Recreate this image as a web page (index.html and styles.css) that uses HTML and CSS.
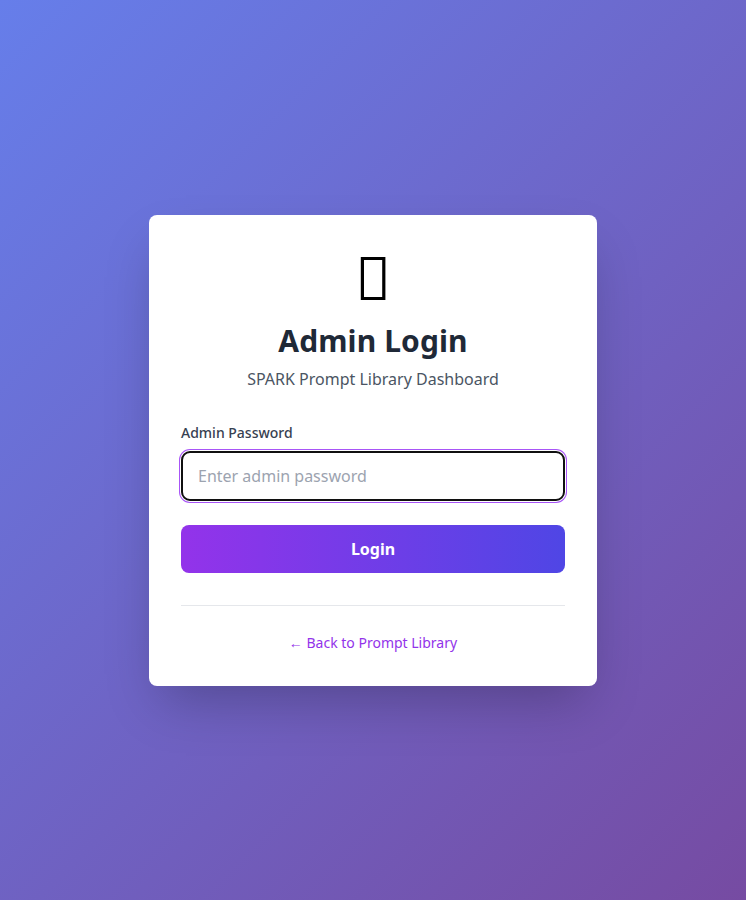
FILE: index.html
```html
<!DOCTYPE html>
<html lang="en">
<head>
<meta charset="UTF-8">
<meta name="viewport" content="width=device-width, initial-scale=1">
<title>Admin Login</title>
<link rel="stylesheet" href="styles.css">
</head>
<body>
<main class="card">
  <header class="header">
    <svg class="emblem" width="26" height="60" viewBox="0 0 26 60" aria-hidden="true">
      <path fill="#000" fill-rule="evenodd" d="M.8 10H25.4V53H.8ZM4 13V50H22.2V13Z"/>
    </svg>
    <h1 class="title">Admin Login</h1>
    <p class="subtitle">SPARK Prompt Library Dashboard</p>
  </header>
  <form class="form">
    <div>
      <label class="label" for="password">Admin Password</label>
      <input class="input" type="password" id="password" placeholder="Enter admin password">
    </div>
    <button class="button" type="submit">Login</button>
  </form>
  <footer class="footer">
    <a class="link" href="#">← Back to Prompt Library</a>
  </footer>
</main>
</body>
</html>
```

FILE: styles.css
```css
*, ::before, ::after { box-sizing: border-box; }
body {
  margin: 0;
  min-height: 100vh;
  display: flex;
  align-items: center;
  justify-content: center;
  padding: 16px;
  font-family: "Noto Sans", sans-serif;
  font-size: 16px;
  line-height: 24px;
  background: linear-gradient(135deg, #667eea 0%, #764ba2 100%);
}
.card {
  width: 448px;
  padding: 32px;
  background: #fff;
  border-radius: 8px;
  box-shadow: 0 25px 50px -12px rgba(0, 0, 0, 0.25);
}
.header { text-align: center; margin-bottom: 32px; }
.emblem { display: block; margin: 0 auto 16px; }
.title { margin: 0; font-size: 30px; line-height: 36px; font-weight: 700; letter-spacing: 0.1px; color: #1f2937; }
.subtitle { margin: 8px 0 0; color: #4b5563; }
.form { display: flex; flex-direction: column; gap: 24px; }
.label { display: block; margin-bottom: 8px; font-size: 14px; line-height: 20px; font-weight: 500; color: #374151; }
.input {
  display: block;
  width: 100%;
  height: 50px;
  padding: 11px 15px;
  border: 2px solid #101010;
  border-radius: 9px;
  outline: 0;
  font: inherit;
  background: #fff;
  box-shadow: 0 0 0 1px #fff, 0 0 0 2px #a855f7;
}
.input::placeholder { color: #9ca3af; opacity: 1; }
.button {
  height: 48px;
  border: 0;
  border-radius: 8px;
  font: inherit;
  font-weight: 700;
  color: #fff;
  background: linear-gradient(to right, #9333ea, #4f46e5);
}
.footer { margin-top: 32px; padding-top: 24px; border-top: 1px solid #e5e7eb; text-align: center; }
.link { font-size: 14px; line-height: 20px; color: #9333ea; text-decoration: none; }
```
